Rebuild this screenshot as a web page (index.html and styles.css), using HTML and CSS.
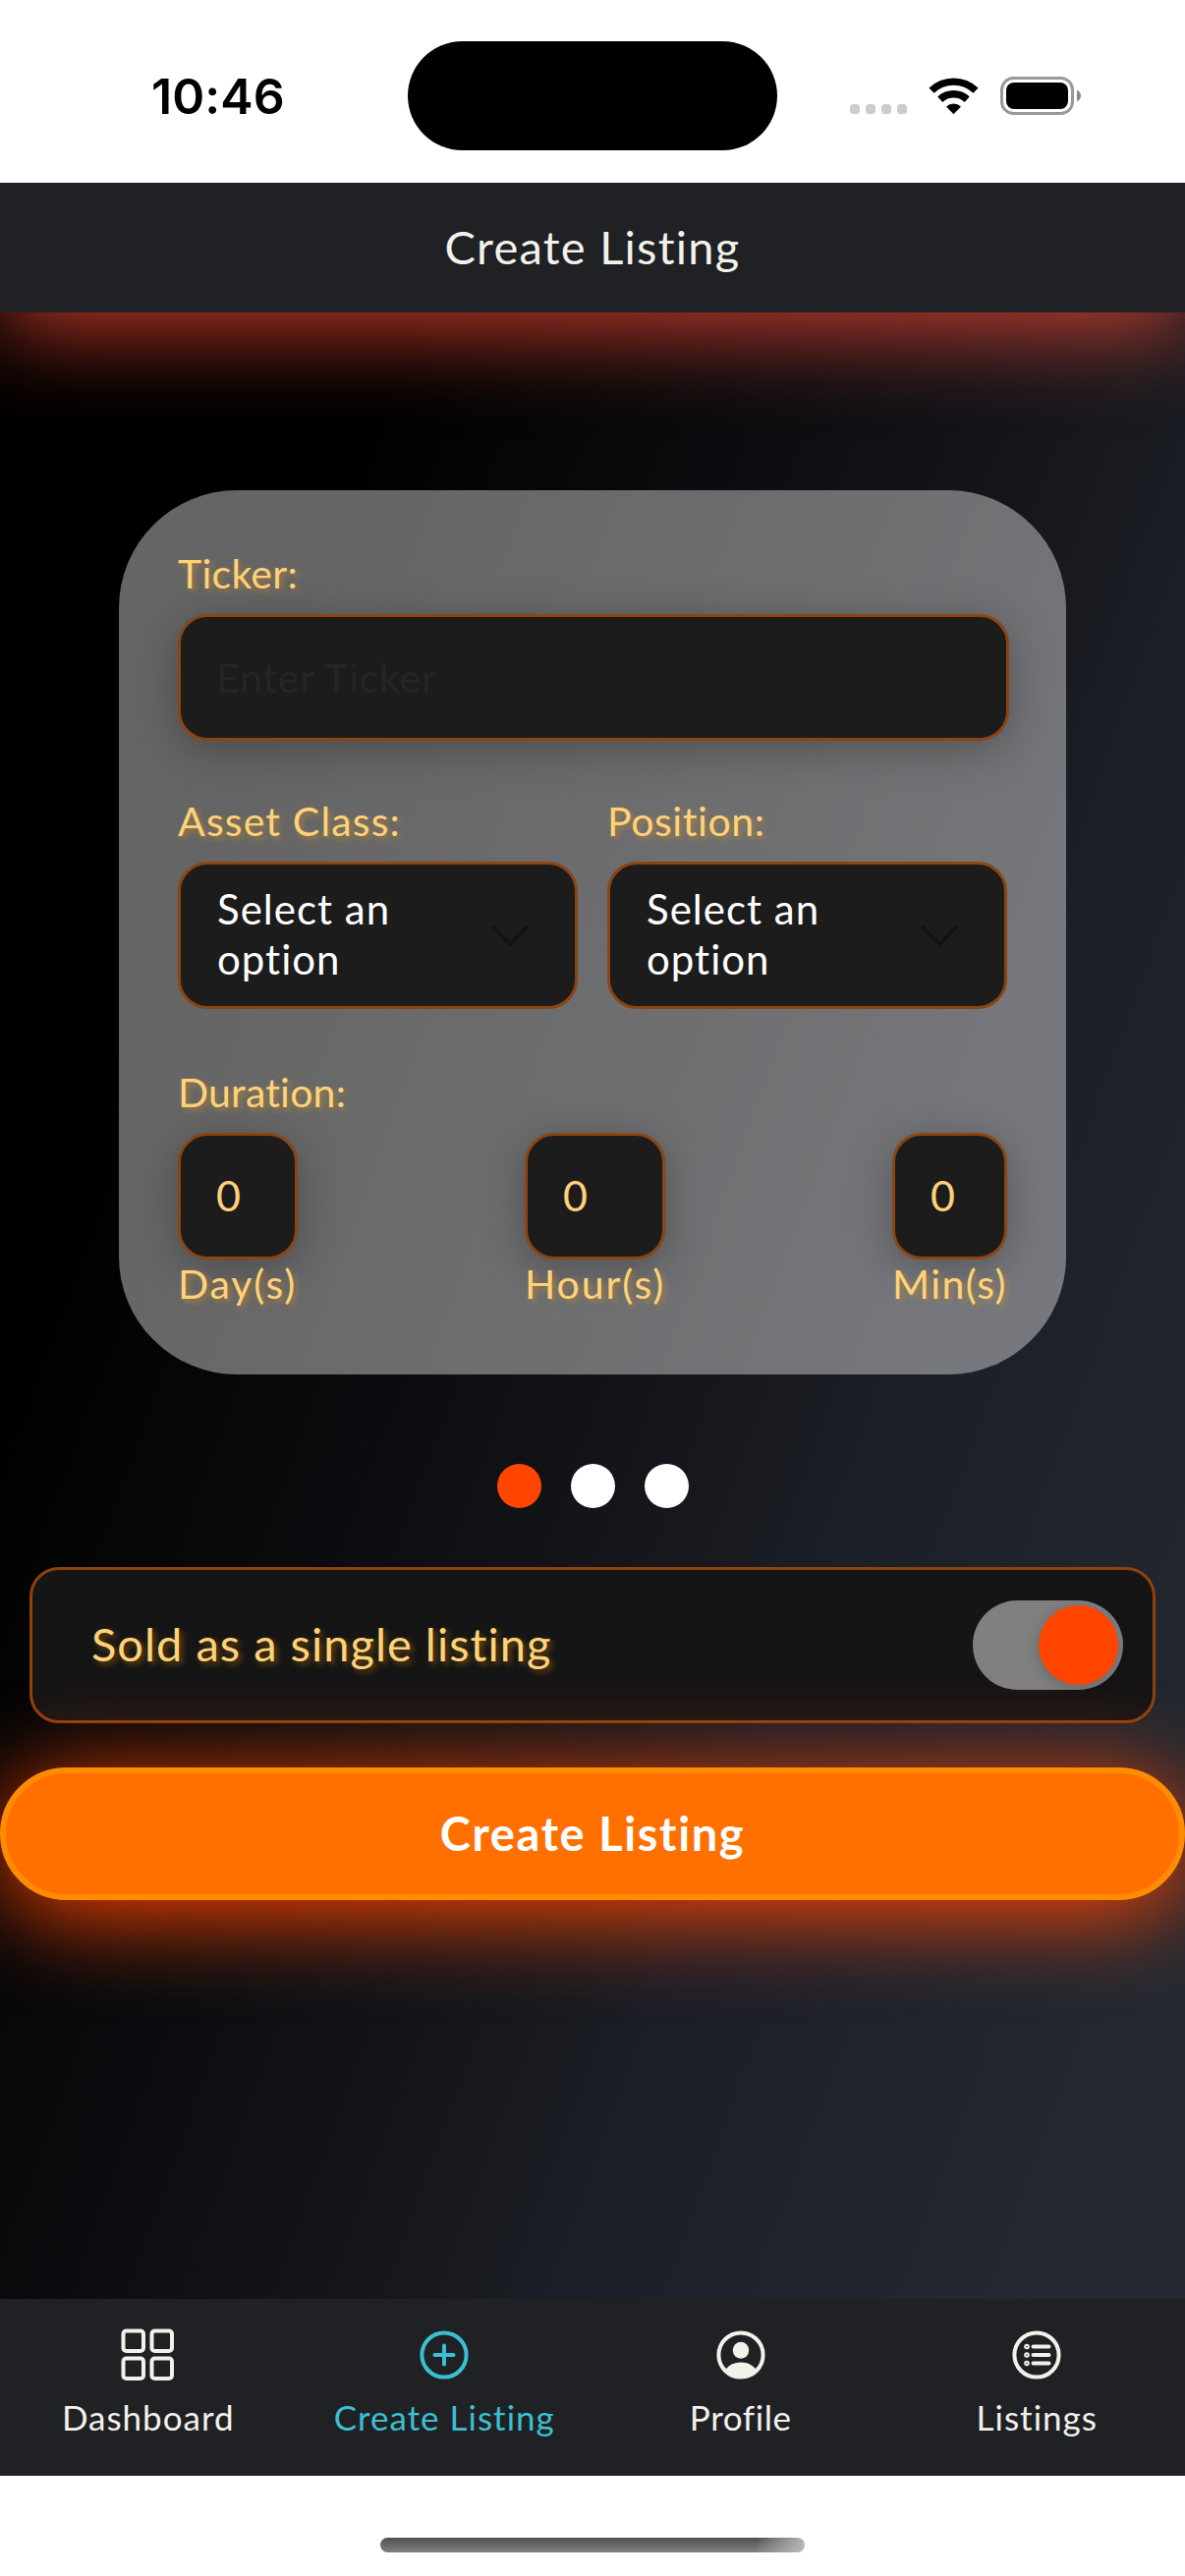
FILE: index.html
```html
<!DOCTYPE html>
<html lang="en">
<head>
<meta charset="utf-8">
<title>Create Listing</title>
<link rel="stylesheet" href="styles.css">
</head>
<body>
<div class="status">
  <span class="time">10:46</span>
  <div class="island"></div>
  <svg class="status-icons" width="236" height="40" viewBox="0 0 236 40">
    <g fill="#ccc"><rect x="0" y="28" width="10" height="10" rx="3.5"/><rect x="16" y="28" width="10" height="10" rx="3.5"/><rect x="32" y="28" width="10" height="10" rx="3.5"/><rect x="48" y="28" width="10" height="10" rx="3.5"/></g>
    <g fill="none" stroke="#000" stroke-width="7.4"><path d="M83 14.2a32.5 32.5 0 0 1 45 0"/><path d="M91.8 23.2a20 20 0 0 1 27.4 0"/></g>
    <path d="M98 30.4a11.5 11.5 0 0 1 15 0l-7.5 7.8z"/>
    <rect x="154.5" y="1.5" width="72" height="36" rx="12" fill="none" stroke="#999" stroke-width="3"/>
    <rect x="159" y="6" width="63" height="27" rx="8"/>
    <path d="M231 13.500q4 2.500 4 6t-4 6z" fill="#888"/>
  </svg>
</div>
<header class="header"><h1 class="title">Create Listing</h1></header>
<main class="main">
  <section class="card">
    <div class="field">
      <label class="label ticker">Ticker:</label>
      <div class="box input"><span class="placeholder">Enter Ticker</span></div>
    </div>
    <div class="pair">
      <div class="field">
        <label class="label asset">Asset Class:</label>
        <div class="box select"><span class="choice">Select an option</span><svg class="chevron" width="42" height="26" viewBox="0 0 42 26"><path d="M4 4l17 17 17-17"/></svg></div>
      </div>
      <div class="field">
        <label class="label">Position:</label>
        <div class="box select"><span class="choice">Select an option</span><svg class="chevron" width="42" height="26" viewBox="0 0 42 26"><path d="M4 4l17 17 17-17"/></svg></div>
      </div>
    </div>
    <div class="field last">
      <label class="label length">Duration:</label>
      <div class="durations">
        <div class="duration day"><div class="box number">0</div><span class="unit">Day(s)</span></div>
        <div class="duration hour"><div class="box number">0</div><span class="unit">Hour(s)</span></div>
        <div class="duration min"><div class="box number">0</div><span class="unit">Min(s)</span></div>
      </div>
    </div>
  </section>
  <div class="dots"><i class="dot active"></i><i class="dot"></i><i class="dot"></i></div>
  <div class="single"><span class="single-text">Sold as a single listing</span><div class="toggle"><div class="knob"></div></div></div>
  <button class="submit">Create Listing</button>
</main>
<nav class="nav">
  <a class="tab"><svg class="icon" viewBox="0 0 60 60"><g><rect x="4.500" y="5.500" width="20.500" height="20.500" rx="3"/><rect x="33.500" y="5.500" width="20.500" height="20.500" rx="3"/><rect x="4.500" y="33.500" width="20.500" height="20.500" rx="3"/><rect x="33.500" y="33.500" width="20.500" height="20.500" rx="3"/></g></svg><span class="tab-text">Dashboard</span></a>
  <a class="tab current"><svg class="icon" viewBox="0 0 60 60"><circle cx="30" cy="30" r="22.600"/><path d="M30 20.500v19M20.500 30h19"/></svg><span class="tab-text">Create Listing</span></a>
  <a class="tab"><svg class="icon" viewBox="0 0 60 60"><circle cx="30" cy="30" r="22.600"/><ellipse class="solid" cx="30" cy="25.200" rx="8.200" ry="8.500"/><path class="solid" d="M14.500 44.500Q20 37.500 30 37.500T45.500 44.500Q39 53.500 30 53.500T14.500 44.500z"/></svg><span class="tab-text profile">Profile</span></a>
  <a class="tab"><svg class="icon" viewBox="0 0 60 60"><circle cx="30" cy="30" r="22.600"/><path class="thin" d="M26.500 21.500h16M26.500 30h16M26.500 38.500h16"/><g class="bullets"><circle cx="20" cy="21.500" r="1.800"/><circle cx="20" cy="30" r="1.800"/><circle cx="20" cy="38.500" r="1.800"/></g></svg><span class="tab-text">Listings</span></a>
</nav>
<footer class="home"><div class="home-bar"></div></footer>
</body>
</html>
```
FILE: styles.css
```css
* { box-sizing: border-box; }
body {
  margin: 0;
  width: 1206px;
  height: 2622px;
  display: flex;
  flex-direction: column;
  overflow: hidden;
  background: #fff;
  font-family: Lato, "Liberation Sans", sans-serif;
}

.status {
  height: 186px;
  display: grid;
  grid-template-columns: 415px 376px 415px;
  align-items: center;
  background: #fff;
  position: relative;
  z-index: 2;
}
.time {
  padding-left: 154px;
  margin-top: 10px;
  font: 600 50px/60px Inter, sans-serif;
  letter-spacing: .1px;
}
.island { height: 111px; margin-top: 8px; border-radius: 56px; background: #000; }
.status-icons { margin: 10px 0 0 74px; }

.header {
  height: 132px;
  padding-bottom: 2px;
  background: #202125;
  box-shadow: 0 14px 94px rgba(255, 76, 54, .8);
  display: flex;
  align-items: center;
  justify-content: center;
  position: relative;
  z-index: 1;
}
.title { margin: 0; font-weight: 400; font-size: 47px; line-height: 60px; letter-spacing: 1.25px; color: #f2f2ea; }

.main {
  height: 2022px;
  padding-top: 181px;
  background: linear-gradient(110deg, #000 20%, #0c0d10 42%, #181a1f 62%, #1b1e27 66%, #242932 93%);
  display: flex;
  flex-direction: column;
  overflow: hidden;
}
.card {
  width: 964px;
  height: 900px;
  margin-left: 121px;
  padding: 60px;
  border-radius: 120px;
  background: rgba(255, 255, 255, .395);
  display: flex;
  flex-direction: column;
  gap: 57px;
}
.field { display: flex; flex-direction: column; }
.label, .unit {
  font-size: 41px;
  line-height: 50px;
  color: #ffd27a;
  text-shadow: 3px 3px 6px rgba(255, 165, 0, .4);
  letter-spacing: .6px;
}
.label { margin-bottom: 16px; }
.ticker { letter-spacing: .3px; }
.asset { letter-spacing: 1.15px; }
.length { letter-spacing: .2px; }
.box {
  border: 3px solid #8b4513;
  border-radius: 30px;
  background: #1c1c1c;
  display: flex;
  align-items: center;
  padding-left: 36px;
  font-size: 41px;
}
.input, .number { height: 129px; box-shadow: 0 9px 45px rgba(0, 0, 0, .28); }
.input { width: 846px; }
.placeholder { color: #252527; letter-spacing: .8px; }
.pair { height: 216px; display: grid; grid-template-columns: 1fr 1fr; column-gap: 30px; }
.select { height: 150px; justify-content: space-between; padding: 0 45px 3px 37px; line-height: 51px; color: #fff; }
.choice { width: 220px; font-size: 42px; letter-spacing: 1px; }
.chevron { margin-top: 4px; fill: none; stroke: #121413; stroke-width: 4; stroke-linecap: round; stroke-linejoin: round; }
.last { margin-top: 3px; }
.durations { display: flex; justify-content: space-between; }
.duration { display: flex; flex-direction: column; }
.day { width: 122px; }
.hour { width: 143px; }
.min { width: 117px; }
.number { padding-bottom: 2px; font-size: 43px; color: #ffd27a; }
.unit { white-space: nowrap; }
.day .unit, .hour .unit { letter-spacing: 1.9px; }
.min .unit { letter-spacing: 1.4px; }

.dots { display: flex; justify-content: center; gap: 30px; margin-top: 91px; }
.dot { width: 45px; height: 45px; border-radius: 50%; background: #fff; }
.active { background: #ff4500; }

.single {
  height: 159px;
  margin: 60px 30px 0;
  padding: 0 30px 0 60px;
  border: 3px solid #8f410c;
  border-radius: 30px;
  background: #151515;
  display: flex;
  align-items: center;
  justify-content: space-between;
}
.single-text { margin-bottom: 3px; font-size: 47px; color: #ffd27a; text-shadow: 3px 3px 6px rgba(255, 165, 0, .4); letter-spacing: 1px; }
.toggle { width: 153px; height: 91px; padding: 5px; border-radius: 46px; background: #808080; display: flex; justify-content: flex-end; }
.knob { width: 81px; height: 81px; border-radius: 50%; background: #ff4500; box-shadow: 0 3px 15px rgba(0, 0, 0, .2); }

.submit {
  height: 135px;
  flex: none;
  margin: 45px 0 0;
  padding: 0 0 1px;
  border: 6px solid #ff8c00;
  border-radius: 68px;
  background: #ff7000;
  box-shadow: 0 14px 94px #ff4500;
  color: #fff;
  font: 700 47px/60px Lato, sans-serif;
  letter-spacing: 1.6px;
}

.nav { height: 180px; background: #202125; display: flex; position: relative; z-index: 1; }
.tab { flex: 1; display: flex; flex-direction: column; align-items: center; padding-top: 27px; color: #f2f2ea; }
.current { color: #3bc0d2; }
.icon { width: 60px; height: 60px; fill: none; stroke: currentColor; stroke-width: 4; stroke-linecap: round; }
.solid { fill: currentColor; stroke: none; }
.thin { stroke-width: 4; }
.bullets { stroke-width: 2; }
.tab-text { margin-top: 12px; font-size: 35px; line-height: 42px; letter-spacing: 1px; }
.profile { letter-spacing: .6px; }

.home { height: 102px; padding-top: 63px; }
.home-bar {
  width: 432px;
  height: 15px;
  margin: 0 auto;
  border-radius: 8px;
  background: linear-gradient(100deg, transparent 88%, #bbb 100%), linear-gradient(#505050, #808080);
}
```
